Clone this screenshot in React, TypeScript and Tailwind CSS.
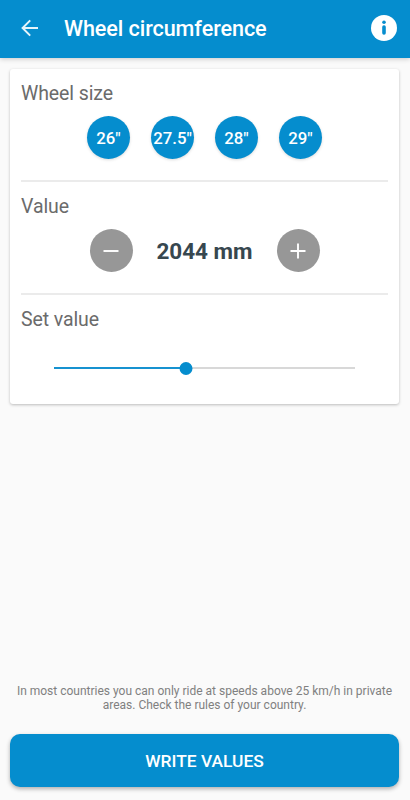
import React from 'react'
import * as Slider from '@radix-ui/react-slider'

const MIN = 1500
const MAX = 2750

const SIZES = [
  { label: '26"', value: 2044 },
  { label: '27.5"', value: 2148 },
  { label: '28"', value: 2170 },
  { label: '29"', value: 2298 },
]

function Section({ title, children }: { title: string; children: React.ReactNode }) {
  return (
    <section className="h-[113px] border-b-2 border-[#ebebeb] pt-[13px]">
      <h2 className="text-[19.5px] leading-6 tracking-[-0.1px] text-[#6b6b6b]">{title}</h2>
      {children}
    </section>
  )
}

function RoundButton({ label, onClick, children }: { label: string; onClick: () => void; children: React.ReactNode }) {
  return (
    <button
      aria-label={label}
      onClick={onClick}
      className="flex size-[43px] items-center justify-center rounded-full bg-[#979797]"
    >
      <svg width="16" height="16" viewBox="0 0 16 16" stroke="white" strokeWidth="1.9">
        {children}
      </svg>
    </button>
  )
}

export default function App() {
  const [value, setValue] = React.useState(2044)

  const change = (v: number) => setValue(Math.min(MAX, Math.max(MIN, v)))

  return (
    <div className="flex h-[800px] w-[410px] flex-col bg-[#fafafa] font-['Roboto',sans-serif]">
      <header className="flex h-[58px] shrink-0 items-center bg-[#058dce] pr-[13px] pl-[21px] shadow-[0_1px_5px_rgba(0,0,0,0.2)]">
        <button aria-label="Back" className="-mt-0.5">
          <svg width="18" height="18" viewBox="0 0 18 18" fill="none" stroke="white" strokeOpacity="0.9" strokeWidth="2">
            <path d="M17 9H1.6M9.2 1.4L1.6 9L9.2 16.6" />
          </svg>
        </button>
        <h1 className="ml-[25px] text-[21.6px] leading-7 font-medium tracking-[-0.08px] text-white">Wheel circumference</h1>
        <button aria-label="Info" className="-mt-0.5 ml-auto">
          <svg width="26" height="26" viewBox="0 0 26 26">
            <circle cx="13" cy="13" r="13" fill="white" />
            <circle cx="13" cy="7.2" r="1.8" fill="#058dce" />
            <rect x="11.2" y="10.2" width="3.6" height="9.6" rx="1.7" fill="#058dce" />
          </svg>
        </button>
      </header>

      <main className="mt-[11px] mr-[11px] ml-[10px] h-[335px] rounded-[3px] bg-white px-[11px] shadow-[0_1px_3px_rgba(0,0,0,0.25)]">
        <Section title="Wheel size">
          <div className="mt-[10px] flex justify-center gap-[21px]">
            {SIZES.map((s) => (
              <button
                key={s.label}
                onClick={() => change(s.value)}
                className="flex size-[43px] items-center justify-center rounded-full bg-[#058dce] pt-0.5 text-[16.8px] font-medium whitespace-nowrap text-white shadow-[0_1px_3px_rgba(0,0,0,0.15)]"
              >
                {s.label}
              </button>
            ))}
          </div>
        </Section>

        <Section title="Value">
          <div className="mt-[10px] flex items-center justify-center">
            <RoundButton label="Decrease" onClick={() => change(value - 1)}>
              <path d="M0.5 8H15.5" />
            </RoundButton>
            <div className="w-[144px] pt-0.5 text-center text-[22.5px] font-bold text-[#37474f]">{value} mm</div>
            <RoundButton label="Increase" onClick={() => change(value + 1)}>
              <path d="M0.5 8H15.5M8 0.5V15.5" />
            </RoundButton>
          </div>
        </Section>

        <section className="pt-[13px]">
          <h2 className="text-[19.5px] leading-6 tracking-[-0.1px] text-[#6b6b6b]">Set value</h2>
          <Slider.Root
            min={MIN}
            max={MAX}
            value={[value]}
            onValueChange={([v]) => change(v)}
            className="relative mt-[26px] ml-[33px] flex h-5 w-[301px] items-center"
          >
            <Slider.Track className="relative h-[2px] grow bg-[#d8d8d8]">
              <Slider.Range className="absolute h-full bg-[#1692d0]" />
            </Slider.Track>
            <Slider.Thumb aria-label="Circumference" className="block size-[13px] rounded-full bg-[#058dce] outline-none" />
          </Slider.Root>
        </section>
      </main>

      <footer className="mt-auto pr-[11px] pb-[13px] pl-[10px]">
        <p className="text-center text-[12px] leading-[14px] text-[#808080]">
          In most countries you can only ride at speeds above 25 km/h in private
          <br />
          areas. Check the rules of your country.
        </p>
        <button className="mt-[22px] h-[53px] w-full rounded-[10px] bg-[#058dce] pt-0.5 text-[17.4px] font-medium text-white shadow-[0_2px_4px_rgba(0,0,0,0.3)]">
          WRITE VALUES
        </button>
      </footer>
    </div>
  )
}
